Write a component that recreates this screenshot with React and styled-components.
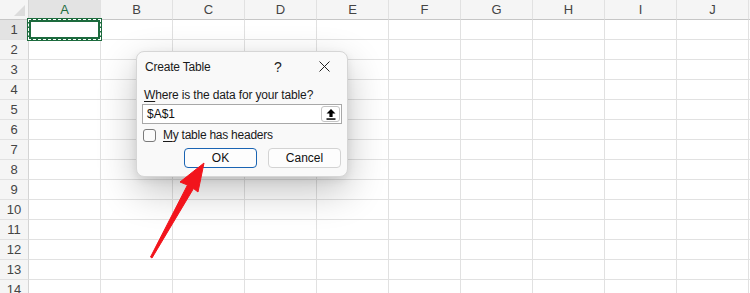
import React from "react";
import styled, { createGlobalStyle } from "styled-components";

const GlobalStyle = createGlobalStyle`
  html, body {
    margin: 0;
    padding: 0;
    background: #ffffff;
    overflow: hidden;
  }
  body {
    font-family: "Liberation Sans", Arial, sans-serif;
  }
`;

const COLS = ["A", "B", "C", "D", "E", "F", "G", "H", "I", "J"];
const ROWS = Array.from({ length: 14 }, (_, i) => i + 1);

const Page = styled.div`
  position: relative;
  width: 750px;
  height: 293px;
  overflow: hidden;
  background: #fff;
`;

const Sheet = styled.div`
  display: grid;
  grid-template-columns: 29px repeat(10, 72px) 1fr;
  grid-template-rows: 20px repeat(14, 20px);
  font-size: 13px;
  color: #444;
`;

const Corner = styled.div`
  position: relative;
  box-sizing: border-box;
  background: #f5f5f5;
  border-right: 1px solid #d4d4d4;
  border-bottom: 1px solid #c6c6c6;

  &::after {
    content: "";
    position: absolute;
    right: 3px;
    bottom: 3px;
    border-style: solid;
    border-width: 0 0 11px 11px;
    border-color: transparent transparent #dcdcdc transparent;
  }
`;

const ColHeader = styled.div`
  box-sizing: border-box;
  display: flex;
  align-items: center;
  justify-content: center;
  background: ${(p) => (p.$active ? "#e3e3e3" : "#f5f5f5")};
  color: ${(p) => (p.$active ? "#1d6b3e" : "#444")};
  border-right: 1px solid #e1e1e1;
  border-bottom: 1px solid #c6c6c6;
`;

const RowHeader = styled.div`
  box-sizing: border-box;
  display: flex;
  align-items: center;
  justify-content: center;
  background: ${(p) => (p.$active ? "#e3e3e3" : "#f5f5f5")};
  color: #444;
  border-right: 1px solid #d4d4d4;
  border-bottom: 1px solid #e1e1e1;
`;

const Cell = styled.div`
  position: relative;
  box-sizing: border-box;
  border-right: 1px solid #e1e1e1;
  border-bottom: 1px solid #e1e1e1;
`;

const Filler = styled.div`
  box-sizing: border-box;
  background: ${(p) => (p.$head ? "#f5f5f5" : "#fff")};
  border-bottom: 1px solid ${(p) => (p.$head ? "#c6c6c6" : "#e1e1e1")};
`;

const Selection = styled.div`
  position: absolute;
  top: -2px;
  left: -2px;
  right: -2px;
  bottom: -2px;
  border: 4px solid #1d6b3e;
  z-index: 1;

  &::after {
    content: "";
    position: absolute;
    inset: -3px;
    border: 1.5px dashed #ffffff;
  }
`;

const Dialog = styled.div`
  position: absolute;
  left: 136px;
  top: 51px;
  width: 212px;
  height: 126px;
  box-sizing: border-box;
  background: #f9f9f9;
  border: 1px solid #d6d6d6;
  border-radius: 8px;
  box-shadow: 0 14px 38px rgba(0, 0, 0, 0.24), 0 3px 8px rgba(0, 0, 0, 0.08);
  display: flex;
  flex-direction: column;
  font-size: 12px;
  color: #1a1a1a;
  z-index: 2;
`;

const TitleBar = styled.div`
  display: flex;
  align-items: center;
  height: 29px;
  padding-left: 8px;
`;

const Title = styled.span`
  flex: 1;
  font-size: 12px;
  letter-spacing: -0.2px;
  color: #1a1a1a;
`;

const CaptionButton = styled.div`
  width: 46px;
  height: 29px;
  display: flex;
  align-items: center;
  justify-content: center;
  font-size: 14px;
  color: #222;
`;

const Body = styled.div`
  display: flex;
  flex-direction: column;
  padding: 0 6px;
`;

const Label = styled.div`
  margin-top: 6px;
  height: 16px;
  line-height: 16px;
  letter-spacing: -0.15px;
  padding-left: 1px;

  u {
    text-decoration: underline;
    text-underline-offset: 2px;
  }
`;

const InputBox = styled.div`
  margin: 1px -1px 0;
  height: 20px;
  box-sizing: border-box;
  background: #fff;
  border: 1px solid #a8a8a8;
  display: flex;
  align-items: center;
  padding: 0 1px 0 4px;
`;

const InputText = styled.span`
  flex: 1;
  font-size: 12px;
  color: #111;
`;

const PickButton = styled.div`
  width: 19px;
  height: 16px;
  box-sizing: border-box;
  border: 1px solid #c4c4c4;
  border-radius: 3px;
  background: #fff;
  display: flex;
  align-items: center;
  justify-content: center;
`;

const CheckRow = styled.div`
  margin-top: 4px;
  height: 14px;
  display: flex;
  align-items: center;
  gap: 7px;
  letter-spacing: -0.25px;

  u {
    text-decoration: underline;
    text-underline-offset: 2px;
  }
`;

const CheckBox = styled.span`
  width: 13px;
  height: 13px;
  box-sizing: border-box;
  border: 1px solid #7a7a7a;
  border-radius: 3px;
  background: #fbfbfb;
`;

const ButtonRow = styled.div`
  margin-top: 6px;
  display: flex;
  justify-content: flex-end;
  gap: 11px;
`;

const Button = styled.div`
  width: 73px;
  height: 20px;
  box-sizing: border-box;
  border-radius: 4px;
  display: flex;
  align-items: center;
  justify-content: center;
  font-size: 12px;
  color: #111;
  background: #fdfdfd;
  border: 1px solid ${(p) => (p.$primary ? "#1a64b3" : "#d3d3d3")};
`;

const ArrowLayer = styled.svg`
  position: absolute;
  left: 0;
  top: 0;
  z-index: 3;
  pointer-events: none;
`;

const UploadIcon = () => (
  <svg width="10" height="11" viewBox="0 0 10 11">
    <path d="M5 0 L9.5 4.5 L6.6 4.5 L6.6 8 L3.4 8 L3.4 4.5 L0.5 4.5 Z" fill="#000" />
    <rect x="0.5" y="9.3" width="9" height="1.5" fill="#000" />
  </svg>
);

const CloseIcon = () => (
  <svg width="11" height="11" viewBox="0 0 11 11">
    <path d="M0.5 0.5 L10.5 10.5 M10.5 0.5 L0.5 10.5" stroke="#222" strokeWidth="1" />
  </svg>
);

export default function App() {
  return (
    <Page>
      <GlobalStyle />
      <Sheet>
        <Corner />
        {COLS.map((c) => (
          <ColHeader key={c} $active={c === "A"}>
            {c}
          </ColHeader>
        ))}
        <Filler $head />
        {ROWS.map((r) => (
          <React.Fragment key={r}>
            <RowHeader $active={r === 1}>{r}</RowHeader>
            {COLS.map((c) => (
              <Cell key={c}>{r === 1 && c === "A" && <Selection />}</Cell>
            ))}
            <Filler />
          </React.Fragment>
        ))}
      </Sheet>

      <Dialog>
        <TitleBar>
          <Title>Create Table</Title>
          <CaptionButton>?</CaptionButton>
          <CaptionButton>
            <CloseIcon />
          </CaptionButton>
        </TitleBar>
        <Body>
          <Label>
            <u>W</u>here is the data for your table?
          </Label>
          <InputBox>
            <InputText>$A$1</InputText>
            <PickButton>
              <UploadIcon />
            </PickButton>
          </InputBox>
          <CheckRow>
            <CheckBox />
            <span>
              <u>M</u>y table has headers
            </span>
          </CheckRow>
          <ButtonRow>
            <Button $primary>OK</Button>
            <Button>Cancel</Button>
          </ButtonRow>
        </Body>
      </Dialog>

      <ArrowLayer width="750" height="293" viewBox="0 0 750 293">
        <polygon
          points="204,163 198,192 193.5,188.5 152,258 150.5,257 187.5,185 180,182"
          fill="#f2141c"
          stroke="#f2141c"
          strokeWidth="1"
          strokeLinejoin="round"
        />
      </ArrowLayer>
    </Page>
  );
}
